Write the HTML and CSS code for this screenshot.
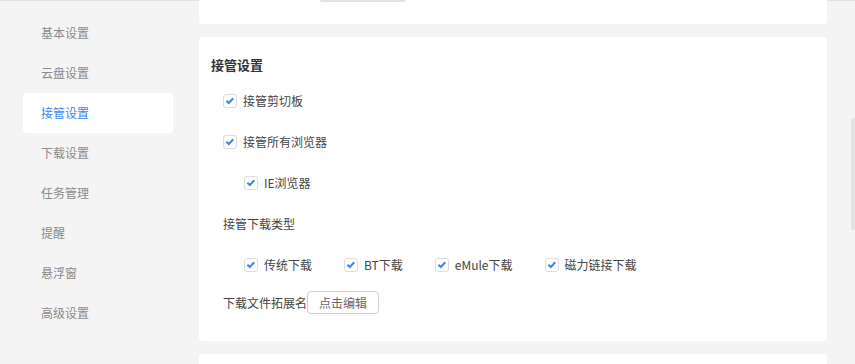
FILE: index.html
```html
<!DOCTYPE html>
<html lang="zh-CN">
<head>
  <meta charset="UTF-8">
  <title>设置</title>
  <link rel="stylesheet" href="styles.css">
</head>
<body>
  <div class="topline"></div>
  <div class="page">
    <div class="sidebar">
      <a class="nav-item">基本设置</a>
      <a class="nav-item">云盘设置</a>
      <a class="nav-item active">接管设置</a>
      <a class="nav-item">下载设置</a>
      <a class="nav-item">任务管理</a>
      <a class="nav-item">提醒</a>
      <a class="nav-item">悬浮窗</a>
      <a class="nav-item">高级设置</a>
    </div>

    <div class="main">
      <div class="card card-prev">
        <div class="prev-btn"></div>
      </div>

      <div class="card card-main">
        <h2>接管设置</h2>
        <div class="row"><span class="check"><svg viewBox="0 0 14 14"><path d="M2.8 6.8 L5.6 9.4 L10.8 3.8"/></svg></span>接管剪切板</div>
        <div class="row"><span class="check"><svg viewBox="0 0 14 14"><path d="M2.8 6.8 L5.6 9.4 L10.8 3.8"/></svg></span>接管所有浏览器</div>
        <div class="row sub"><span class="check"><svg viewBox="0 0 14 14"><path d="M2.8 6.8 L5.6 9.4 L10.8 3.8"/></svg></span>IE浏览器</div>
        <div class="row">接管下载类型</div>
        <div class="row sub types">
          <span class="type"><span class="check"><svg viewBox="0 0 14 14"><path d="M2.8 6.8 L5.6 9.4 L10.8 3.8"/></svg></span>传统下载</span>
          <span class="type"><span class="check"><svg viewBox="0 0 14 14"><path d="M2.8 6.8 L5.6 9.4 L10.8 3.8"/></svg></span>BT下载</span>
          <span class="type"><span class="check"><svg viewBox="0 0 14 14"><path d="M2.8 6.8 L5.6 9.4 L10.8 3.8"/></svg></span>eMule下载</span>
          <span class="type"><span class="check"><svg viewBox="0 0 14 14"><path d="M2.8 6.8 L5.6 9.4 L10.8 3.8"/></svg></span>磁力链接下载</span>
        </div>
        <div class="row ext">下载文件拓展名<button class="edit-btn">点击编辑</button></div>
      </div>

      <div class="card card-next"></div>
    </div>
  </div>
  <div class="scroll-thumb"></div>
</body>
</html>
```

FILE: styles.css
```css
body {
  margin: 0;
  padding: 0;
  background-color: #f4f4f4;
  font-family: "Noto Sans CJK SC", "Liberation Sans", sans-serif;
  font-size: 12px;
  color: #444;
  overflow: hidden;
  height: 364px;
}
.topline {
  height: 1px;
  background-color: #e2e2e2;
}
.page {
  display: flex;
  margin-top: -1px;
}
.sidebar {
  width: 199px;
  padding-top: 13px;
  box-sizing: border-box;
}
.nav-item {
  display: block;
  width: 150px;
  height: 40px;
  line-height: 40px;
  margin-left: 23px;
  padding-left: 18px;
  box-sizing: border-box;
  color: #8a8a8a;
  border-radius: 4px;
}
.nav-item.active {
  background-color: #fff;
  color: #3d86f4;
}
.main {
  width: 628px;
}
.card {
  background-color: #fff;
  border-radius: 4px;
  margin-bottom: 13px;
}
.card-prev {
  height: 24px;
  border-radius: 0 0 4px 4px;
}
.prev-btn {
  width: 86px;
  height: 2px;
  margin-left: 121px;
  background-color: #e4e4e4;
  border-radius: 0 0 3px 3px;
}
.card-main {
  padding: 18px 0 22px 12px;
}
.card-main h2 {
  margin: 0 0 5px 0;
  font-size: 13px;
  line-height: 20px;
  font-weight: bold;
  color: #333;
}
.row {
  display: flex;
  align-items: center;
  height: 41px;
  padding-left: 12px;
}
.row.sub {
  padding-left: 33px;
}
.check {
  display: inline-flex;
  width: 14px;
  height: 14px;
  box-sizing: border-box;
  border: 1px solid #dcdcdc;
  border-radius: 3px;
  margin-right: 6px;
}
.check svg {
  width: 12px;
  height: 12px;
}
.check path {
  fill: none;
  stroke: #3d86f4;
  stroke-width: 2.4;
}
.type {
  display: inline-flex;
  align-items: center;
  margin-right: 32px;
}
.row.ext {
  height: 34px;
}
.edit-btn {
  height: 23px;
  width: 72px;
  padding: 0;
  background-color: #fff;
  border: 1px solid #cfcfcf;
  border-radius: 4px;
  font-family: inherit;
  font-size: 12px;
  color: #666;
}
.card-next {
  height: 20px;
}
.scroll-thumb {
  position: absolute;
  left: 851px;
  top: 118px;
  width: 4px;
  height: 112px;
  background-color: #e3e3e3;
  border-radius: 2px 0 0 2px;
}
```
